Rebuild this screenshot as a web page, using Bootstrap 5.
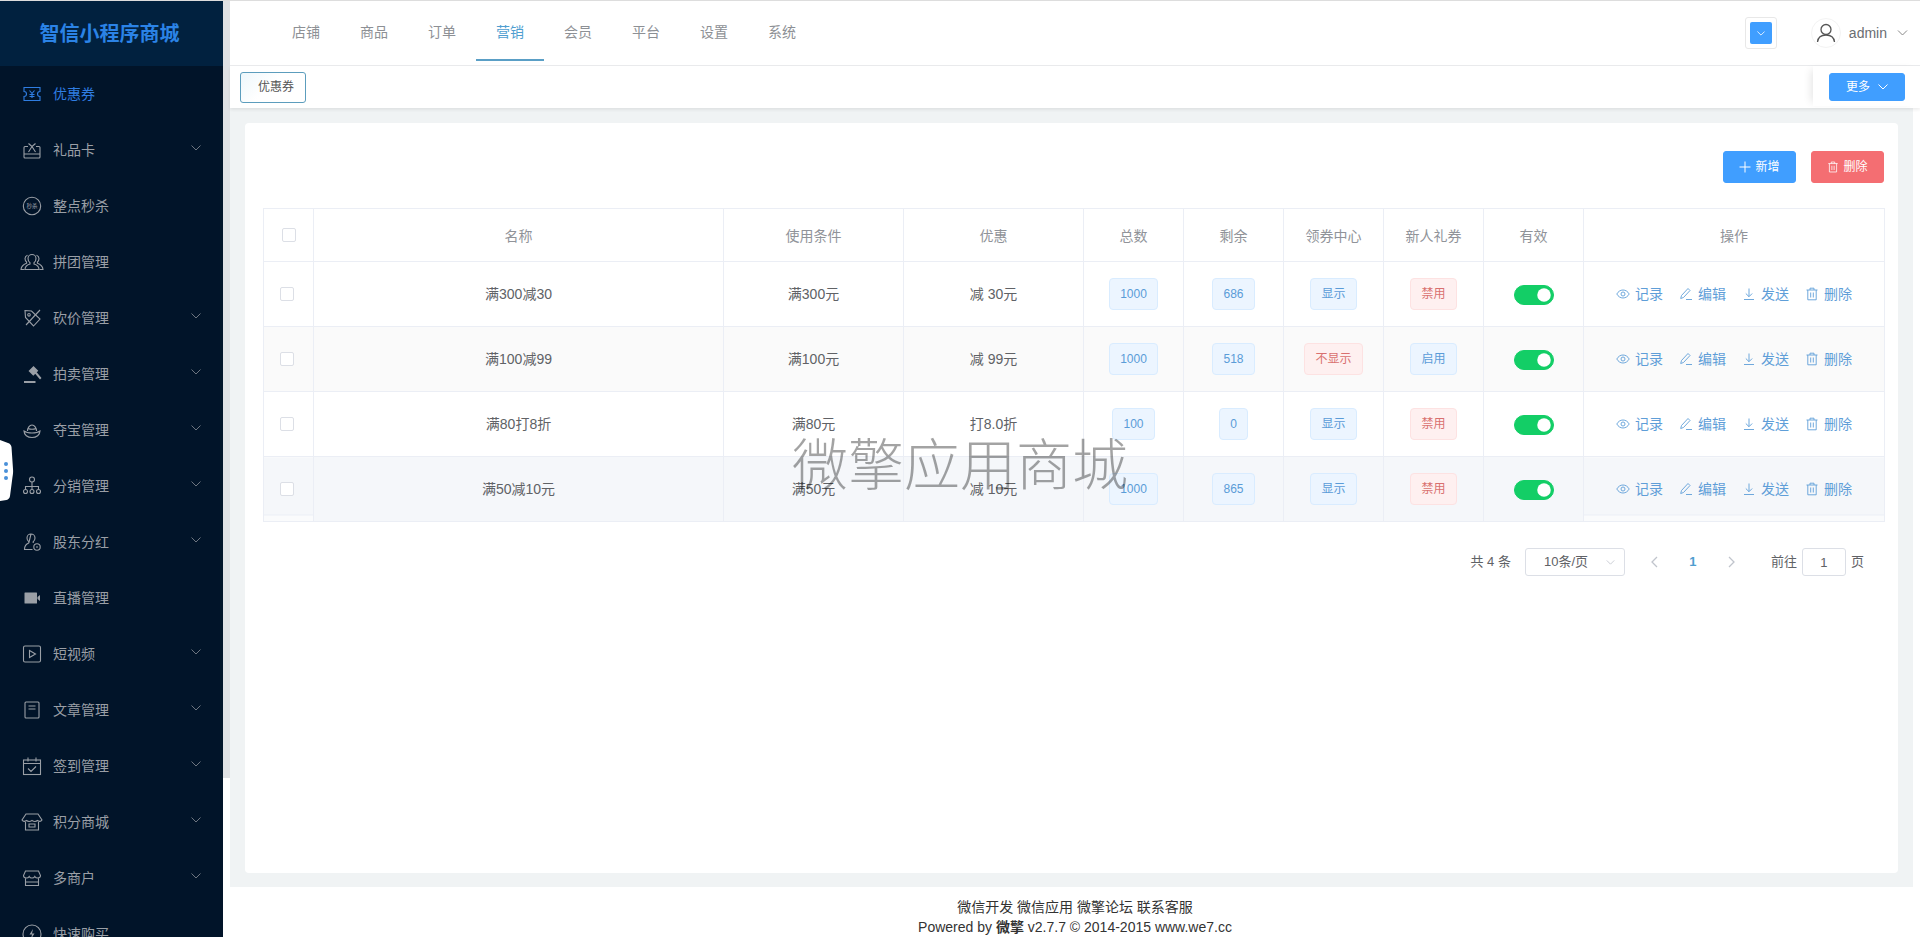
<!DOCTYPE html>
<html lang="zh">
<head>
  <meta charset="UTF-8">
  <title>智信小程序商城</title>
  <meta name="viewport" content="width=device-width, initial-scale=1">
  <link href="https://cdn.jsdelivr.net/npm/bootstrap@5.3.0/dist/css/bootstrap.min.css" rel="stylesheet">
  <style>
    html, body { height: 937px; overflow: hidden; }
    body {
      font-family: "Liberation Sans", "Noto Sans CJK SC", sans-serif;
      font-size: 14px;
      color: #606266;
      background: #fff;
    }
    .app-wrap { height: 937px; border-top: 1px solid #ddd; position: relative; }

    /* left menu */
    .side-menu { width: 223px; flex: none; background: #011429; overflow: hidden; }
    .side-logo {
      height: 65px; padding-right: 4px; background: #01213f; color: #2b83e6; flex: none;
      font-size: 20px; font-weight: 700;
    }
    .side-item {
      height: 56px; padding: 0 22px 0 20px; gap: 9px;
      color: #9a9fa6; text-decoration: none; flex: none;
    }
    .side-item.is-active { color: #2f7de1; }
    .side-item .ico { width: 24px; height: 24px; flex: none; }
    .side-item .arrow { width: 10px; height: 6px; margin: -5px 0 0 auto; color: #6d7580; }
    .ico { fill: none; stroke: currentColor; stroke-width: 1.1; }
    .ico-fill { fill: currentColor; stroke: none; }
    .side-thumb { width: 7px; height: 777px; background: #dfe1e4; flex: none; }

    /* top bar */
    .main-col { min-width: 0; }
    .top-bar { height: 65px; border-bottom: 1px solid #e9eaec; flex: none; }
    .top-nav { padding-left: 42px; }
    .top-nav a {
      width: 68px; height: 60px; line-height: 62px; text-align: center;
      color: #8d9095; text-decoration: none; border-bottom: 2px solid transparent;
    }
    .top-nav a.is-active { color: #4f9ed0; border-bottom-color: #5a9fc6; }
    .lang-box {
      width: 32px; height: 32px; border: 1px solid #e8e8e8; border-radius: 3px;
      margin-right: 34px;
    }
    .lang-box span { width: 22px; height: 22px; background: #409eff; border-radius: 2px; color: #fff; }
    .avatar-box { width: 30px; height: 30px; border: 1px solid #f3f3f3; border-radius: 50%; margin-right: 8px; color: #555; }
    .admin-name { color: #6a6d72; margin-right: 10px; }
    .admin-arrow { color: #888; margin-right: 12px; }
    .top-right { height: 64px; }

    /* tab strip */
    .tab-strip { height: 42px; flex: none; box-shadow: 0 2px 3px rgba(0,0,0,.07); position: relative; z-index: 1; background: #fff; }
    .tab-chip {
      margin: 6px 0 0 10px; width: 66px; height: 31px; line-height: 29px; padding-left: 17px;
      font-size: 12px; color: #555; border: 1px solid #5c9dbd; border-radius: 3px;
      background: linear-gradient(135deg, #eef7fb, #fff 45%);
    }
    .more-box { width: 107px; height: 40px; padding: 7px 15px 0 16px; box-shadow: -6px 0 8px -4px rgba(0,0,0,.1); background: #fff; }
    .btn-more {
      width: 76px; height: 28px; padding: 0; font-size: 12px; line-height: 26px;
      background: #409eff; border-color: #409eff; color: #fff; border-radius: 3px;
    }

    /* content */
    .content-wrap { background: #f0f3f4; padding: 15px; margin-right: 7px; min-height: 0; }
    .panel-box { background: #fff; border-radius: 4px; height: 750px; padding: 28px 14px 0 18px; }
    .btn-blue, .btn-red {
      width: 73px; height: 32px; padding: 0; font-size: 12px; color: #fff; border-radius: 3px;
    }
    .btn-blue { background: #409eff; border-color: #409eff; }
    .btn-red { background: #f46e72; border-color: #f46e72; margin-left: 15px; }
    .btn-blue:hover { background: #409eff; color: #fff; }
    .btn-red:hover { background: #f46e72; color: #fff; }
    .btn-red svg { color: #fff; }

    .coupon-table { table-layout: fixed; width: 1621px; margin: 25px 0 0; border: 1px solid #ebeef5; text-align: center; }
    .coupon-table th, .coupon-table td {
      padding: 0; vertical-align: middle; border: 1px solid #ebeef5; color: #606266; background: transparent;
      box-shadow: none;
    }
    .coupon-table th { height: 53px; padding-top: 2px; font-weight: 400; color: #909399; }
    .coupon-table td { height: 65px; }
    .row-gray { background: #fafafa; }
    .row-hover { background: #f5f7fa; }
    .coupon-table .row-hover td:first-child, .coupon-table .row-hover td:last-child {
      background: linear-gradient(#f5f7fa 0 57px, #ebeef5 57px 58px, #fafbfc 58px);
    }
    .tick-box { display: block; width: 14px; height: 14px; border: 1px solid #dcdfe6; border-radius: 2px; background: #fff; margin: 0 0 0 16px; }
    th .tick-box { margin: -2px 0 0 18px; }
    .soft-tag {
      display: inline-block; height: 32px; line-height: 30px; padding: 0 10px; font-size: 12px;
      border-radius: 4px; vertical-align: middle;
    }
    .tag-blue { color: #5a9cd8; background: #ecf5ff; border: 1px solid #d9ecff; }
    .tag-red { color: #d9706f; background: #fef0f0; border: 1px solid #fde2e2; }
    .coupon-switch.form-check-input {
      width: 40px; height: 20px; margin: 1px 0 0; float: none; border-color: #13ce66; background-color: #13ce66;
    }
    .op-row { gap: 16px; color: #5f9ed8; }
    .op-row a { color: inherit; text-decoration: none; gap: 5px; }
    .op-row svg { width: 14px; height: 14px; }

    /* pagination */
    .pager-row { padding: 26px 20px 0 0; font-size: 13px; }
    .size-picker {
      width: 100px; height: 28px; border: 1px solid #dcdfe6; border-radius: 3px; margin: 0 10px 0 14px; padding: 0 9px 0 0; color: #606266;
    }
    .size-picker span { flex: 1; text-align: center; }
    .size-picker svg { color: #c0c4cc; }
    .pager-arrow { width: 39px; color: #c0c4cc; }
    .pager-now { width: 38px; text-align: center; color: #4f9ed0; font-weight: 700; }
    .jump-label { margin-left: 20px; }
    .jump-input.form-control {
      width: 44px; height: 28px; min-height: 0; padding: 0; margin: 0 5px; text-align: center; font-size: 13px; color: #606266; border-color: #dcdfe6; border-radius: 3px;
    }

    .foot-bar { height: 50px; padding-top: 10px; text-align: center; color: #333; line-height: 20px; flex: none; }

    /* overlays */
    .stamp-text {
      position: absolute; left: 792px; top: 433px; font-size: 56px; line-height: 64px; color: rgba(0,0,0,.36);
      font-weight: 300; white-space: nowrap; pointer-events: none; z-index: 5;
    }
    .side-handle { position: absolute; left: 0; top: 438px; width: 14px; height: 62px; z-index: 5; }
  </style>
</head>
<body>
<svg class="d-none">
  <symbol id="i-ticket" viewBox="0 0 24 24"><path d="M4 5.500h16v4a2.500 2.500 0 0 0 0 5v4H4v-4a2.500 2.500 0 0 0 0-5z"/><path d="M9.500 8.500l2.500 3 2.500-3M12 11.500V16M9.500 12.500h5M9.500 14.500h5"/></symbol>
  <symbol id="i-gift" viewBox="0 0 24 24"><path d="M8 8.500H5a1 1 0 0 0-1 1V19a1 1 0 0 0 1 1h14a1 1 0 0 0 1-1V9.500a1 1 0 0 0-1-1h-3M4 16h16"/><path d="M8.500 5.500l3.500 3 3.500-3M12 8.500L8.500 14M12 8.500l3.500 5.500"/></symbol>
  <symbol id="i-seckill" viewBox="0 0 24 24"><circle cx="12" cy="12" r="8.700"/><text x="12" y="14" text-anchor="middle" font-size="5.500" fill="currentColor" stroke="none">秒杀</text></symbol>
  <symbol id="i-group" viewBox="0 0 24 24"><path d="M12 4.500a4 4 0 0 1 4 4c0 2-1 3.500-2 4.200V14c2.500.8 5 2 5 5.500H5C5 16 7.500 14.800 10 14v-1.300c-1-.7-2-2.200-2-4.200a4 4 0 0 1 4-4z"/><path d="M7.500 5.200A3.600 3.600 0 0 0 5 8.500c0 1.500.7 2.800 1.600 3.500v1.200C4 14.200 1.300 15.200 1 19.500h3.500M16.500 5.200A3.600 3.600 0 0 1 19 8.500c0 1.500-.7 2.800-1.600 3.500v1.200c2.600 1 5.300 2 5.600 6.300h-3.500"/></symbol>
  <symbol id="i-cut" viewBox="0 0 24 24"><path d="M5 4.500l6.500.5 8.500 8-6.500 7-8-8.500z"/><circle cx="9" cy="8.800" r="1.300"/><path d="M20 4L6 19"/></symbol>
  <symbol id="i-gavel" viewBox="0 0 24 24"><path class="ico-fill" d="M13.500 4l4.800 4.800-5 5L8.500 9zM15 11.500l1.500-1.500 5 6-1.500 1.500zM4 19h11.500v2H4z"/></symbol>
  <symbol id="i-ingot" viewBox="0 0 24 24"><path d="M4 13c0 4 3.500 6.500 8 6.500s8-2.500 8-6.500c-2 1.500-5 2-8 2s-6-.5-8-2z"/><path d="M7.500 13c0-3 2-6 4.500-6s4.500 3 4.500 6M8 10.500c2.500 1 5.500 1 8 0"/></symbol>
  <symbol id="i-tree" viewBox="0 0 24 24"><circle cx="12" cy="5.500" r="2.500"/><path d="M12 8v4.500M5.500 15.500v-3h13v3M12 12.500v3"/><circle cx="5.500" cy="17.500" r="2"/><circle cx="12" cy="17.500" r="2"/><circle cx="18.500" cy="17.500" r="2"/></symbol>
  <symbol id="i-holder" viewBox="0 0 24 24"><path d="M11 4a4 4 0 0 1 4 4c0 1.500-.8 3-1.800 3.700V13M8.800 13v-1.300C7.800 11 7 9.500 7 8a4 4 0 0 1 4-4zM8.800 13C6 14 4.500 16 4.500 19.500h8"/><circle cx="17" cy="17" r="3.200"/><path d="M16 17h2"/></symbol>
  <symbol id="i-live" viewBox="0 0 24 24"><path class="ico-fill" d="M5 6.500h11.500a.5.5 0 0 1 .5.500v10a.5.5 0 0 1-.5.500H5a.5.5 0 0 1-.5-.5V7a.5.5 0 0 1 .5-.5zM17.500 11l2.500-2v6l-2.500-2z"/></symbol>
  <symbol id="i-play" viewBox="0 0 24 24"><rect x="3.500" y="4" width="17" height="16" rx="1.500"/><path d="M9.500 8.500v7l6-3.500z"/></symbol>
  <symbol id="i-doc" viewBox="0 0 24 24"><rect x="5" y="4" width="14" height="16" rx="1"/><path d="M8.500 8h7M8.500 11h7"/></symbol>
  <symbol id="i-cal" viewBox="0 0 24 24"><rect x="3.500" y="6" width="17" height="14.500"/><path d="M3.500 9.500h17M8 3.500v4M16 3.500v4M8 14.500l3 3 5-5"/></symbol>
  <symbol id="i-shop" viewBox="0 0 24 24"><path d="M6 4h12l4 6c-1 1.500-3 1.500-4.500.5-1.500 1.200-3.500 1.200-5.500 0-2 1.200-4 1.200-5.500 0C5 11.500 3 11.500 2 10zM5.500 12v8h13v-8M9 14h6v3H9z"/></symbol>
  <symbol id="i-store" viewBox="0 0 24 24"><path d="M5.500 5h13l2 4.500c0 1.500-1.300 2.500-2.800 2.500-1.300 0-2.400-.7-2.900-1.600-.5.900-1.600 1.600-2.800 1.600s-2.300-.7-2.800-1.600C8.700 11.300 7.600 12 6.300 12c-1.500 0-2.800-1-2.800-2.500zM5.500 12.500v7h13v-7M5.500 16h13"/></symbol>
  <symbol id="i-fast" viewBox="0 0 24 24"><circle cx="12" cy="12" r="9"/><path class="ico-fill" d="M13 7l-3.500 5.500H12L11 17l3.500-5.500H12z"/></symbol>
  <symbol id="i-down" viewBox="0 0 10 6"><path d="M.5.500L5 5 9.500.5" fill="none" stroke="currentColor"/></symbol>
  <symbol id="i-eye" viewBox="0 0 14 14"><path d="M.8 7C2.200 4.500 4.400 3 7 3s4.800 1.500 6.200 4c-1.400 2.500-3.600 4-6.200 4S2.200 9.500.8 7z" fill="none" stroke="currentColor" stroke-width=".9"/><circle cx="7" cy="7" r="2" fill="none" stroke="currentColor" stroke-width=".9"/></symbol>
  <symbol id="i-edit" viewBox="0 0 14 14"><path d="M9 1.500l2 2-6.500 7-2.800 1 .8-3zM7 12.500h6" fill="none" stroke="currentColor" stroke-width=".9"/></symbol>
  <symbol id="i-send" viewBox="0 0 14 14"><path d="M7 1.500v8M3.800 6.500L7 9.700l3.200-3.200M2 12.500h10" fill="none" stroke="currentColor" stroke-width=".9"/></symbol>
  <symbol id="i-trash" viewBox="0 0 14 14"><path d="M1.500 3h11M5 3V1.200h4V3M2.800 3v9.800h8.400V3M5.700 5.500v5M8.300 5.500v5" fill="none" stroke="currentColor" stroke-width=".9"/></symbol>
</svg>

<div class="app-wrap d-flex">
  <aside class="side-menu d-flex flex-column">
    <div class="side-logo d-flex align-items-center justify-content-center">智信小程序商城</div>
    <a href="#" class="side-item is-active d-flex align-items-center"><svg class="ico"><use href="#i-ticket"/></svg>优惠券</a>
    <a href="#" class="side-item d-flex align-items-center"><svg class="ico"><use href="#i-gift"/></svg>礼品卡<svg class="arrow"><use href="#i-down"/></svg></a>
    <a href="#" class="side-item d-flex align-items-center"><svg class="ico"><use href="#i-seckill"/></svg>整点秒杀</a>
    <a href="#" class="side-item d-flex align-items-center"><svg class="ico"><use href="#i-group"/></svg>拼团管理</a>
    <a href="#" class="side-item d-flex align-items-center"><svg class="ico"><use href="#i-cut"/></svg>砍价管理<svg class="arrow"><use href="#i-down"/></svg></a>
    <a href="#" class="side-item d-flex align-items-center"><svg class="ico"><use href="#i-gavel"/></svg>拍卖管理<svg class="arrow"><use href="#i-down"/></svg></a>
    <a href="#" class="side-item d-flex align-items-center"><svg class="ico"><use href="#i-ingot"/></svg>夺宝管理<svg class="arrow"><use href="#i-down"/></svg></a>
    <a href="#" class="side-item d-flex align-items-center"><svg class="ico"><use href="#i-tree"/></svg>分销管理<svg class="arrow"><use href="#i-down"/></svg></a>
    <a href="#" class="side-item d-flex align-items-center"><svg class="ico"><use href="#i-holder"/></svg>股东分红<svg class="arrow"><use href="#i-down"/></svg></a>
    <a href="#" class="side-item d-flex align-items-center"><svg class="ico"><use href="#i-live"/></svg>直播管理</a>
    <a href="#" class="side-item d-flex align-items-center"><svg class="ico"><use href="#i-play"/></svg>短视频<svg class="arrow"><use href="#i-down"/></svg></a>
    <a href="#" class="side-item d-flex align-items-center"><svg class="ico"><use href="#i-doc"/></svg>文章管理<svg class="arrow"><use href="#i-down"/></svg></a>
    <a href="#" class="side-item d-flex align-items-center"><svg class="ico"><use href="#i-cal"/></svg>签到管理<svg class="arrow"><use href="#i-down"/></svg></a>
    <a href="#" class="side-item d-flex align-items-center"><svg class="ico"><use href="#i-shop"/></svg>积分商城<svg class="arrow"><use href="#i-down"/></svg></a>
    <a href="#" class="side-item d-flex align-items-center"><svg class="ico"><use href="#i-store"/></svg>多商户<svg class="arrow"><use href="#i-down"/></svg></a>
    <a href="#" class="side-item d-flex align-items-center"><svg class="ico"><use href="#i-fast"/></svg>快速购买</a>
  </aside>
  <div class="side-thumb"></div>

  <div class="main-col d-flex flex-column flex-grow-1">
    <header class="top-bar d-flex align-items-start">
      <nav class="top-nav d-flex">
        <a href="#">店铺</a><a href="#">商品</a><a href="#">订单</a><a href="#" class="is-active">营销</a><a href="#">会员</a><a href="#">平台</a><a href="#">设置</a><a href="#">系统</a>
      </nav>
      <div class="top-right d-flex align-items-center ms-auto">
        <div class="lang-box d-flex align-items-center justify-content-center"><span class="d-flex align-items-center justify-content-center"><svg width="8" height="5"><use href="#i-down"/></svg></span></div>
        <div class="avatar-box d-flex align-items-center justify-content-center">
          <svg width="22" height="22" viewBox="0 0 22 22" fill="none" stroke="currentColor" stroke-width="1.300"><circle cx="11" cy="7.500" r="5"/><path d="M2.500 20c.5-4.500 4-7 8.500-7s8 2.500 8.500 7"/></svg>
        </div>
        <span class="admin-name">admin</span>
        <svg class="admin-arrow" width="11" height="6"><use href="#i-down"/></svg>
      </div>
    </header>

    <div class="tab-strip d-flex justify-content-between">
      <div class="tab-chip">优惠券</div>
      <div class="more-box">
        <button type="button" class="btn btn-more d-flex align-items-center justify-content-center gap-2">更多 <svg width="10" height="6"><use href="#i-down"/></svg></button>
      </div>
    </div>

    <main class="content-wrap flex-grow-1">
      <div class="panel-box">
        <div class="d-flex justify-content-end">
          <button type="button" class="btn btn-blue d-flex align-items-center justify-content-center gap-1">
            <svg width="12" height="12" viewBox="0 0 12 12"><path d="M6 .5v11M.5 6h11" stroke="#fff" fill="none"/></svg> 新增</button>
          <button type="button" class="btn btn-red d-flex align-items-center justify-content-center gap-1">
            <svg width="12" height="12"><use href="#i-trash"/></svg> 删除</button>
        </div>

        <table class="table coupon-table">
          <colgroup>
            <col style="width:50px"><col style="width:410px"><col style="width:180px"><col style="width:180px">
            <col style="width:100px"><col style="width:100px"><col style="width:100px"><col style="width:100px"><col style="width:100px"><col style="width:301px">
          </colgroup>
          <thead>
            <tr>
              <th><span class="tick-box"></span></th>
              <th>名称</th><th>使用条件</th><th>优惠</th><th>总数</th><th>剩余</th><th>领券中心</th><th>新人礼券</th><th>有效</th><th>操作</th>
            </tr>
          </thead>
          <tbody id="couponBody"></tbody>
        </table>

        <div class="pager-row d-flex align-items-center justify-content-end">
          <span>共 4 条</span>
          <div class="size-picker d-flex align-items-center"><span>10条/页</span><svg width="9" height="5"><use href="#i-down"/></svg></div>
          <span class="pager-arrow d-flex justify-content-center"><svg width="7" height="12" viewBox="0 0 7 12"><path d="M6 1L1 6l5 5" fill="none" stroke="currentColor" stroke-width="1.300"/></svg></span>
          <span class="pager-now">1</span>
          <span class="pager-arrow d-flex justify-content-center"><svg width="7" height="12" viewBox="0 0 7 12"><path d="M1 1l5 5-5 5" fill="none" stroke="currentColor" stroke-width="1.300"/></svg></span>
          <span class="jump-label">前往</span>
          <input type="text" class="form-control jump-input" value="1">
          <span>页</span>
        </div>
      </div>
    </main>

    <footer class="foot-bar">
      <div>微信开发 微信应用 微擎论坛 联系客服</div>
      <div>Powered by <b>微擎</b> v2.7.7 © 2014-2015 www.we7.cc</div>
    </footer>
  </div>

  <div class="stamp-text">微擎应用商城</div>
  <svg class="side-handle" viewBox="0 0 14 62">
    <path d="M0 1L8 4c2 .6 3 2 3.500 4L13 30c.3 3 0 5-.5 8l-2.500 19c-.3 2-1.500 3.500-3.500 4L0 62z" fill="#fff"/>
    <circle cx="6" cy="25" r="2" fill="#4a90d9"/><circle cx="6" cy="32" r="2" fill="#4a90d9"/><circle cx="6" cy="39" r="2" fill="#4a90d9"/>
  </svg>
</div>

<script src="https://cdn.jsdelivr.net/npm/bootstrap@5.3.0/dist/js/bootstrap.bundle.min.js"></script>
<script>
  // table rows
  const kupon = [
    { nama: "满300减30", syarat: "满300元", diskon: "减 30元", total: 1000, sisa: 686, pusat: ["显示", "blue"], baru: ["禁用", "red"], kelas: "" },
    { nama: "满100减99", syarat: "满100元", diskon: "减 99元", total: 1000, sisa: 518, pusat: ["不显示", "red"], baru: ["启用", "blue"], kelas: "row-gray" },
    { nama: "满80打8折", syarat: "满80元", diskon: "打8.0折", total: 100, sisa: 0, pusat: ["显示", "blue"], baru: ["禁用", "red"], kelas: "" },
    { nama: "满50减10元", syarat: "满50元", diskon: "减 10元", total: 1000, sisa: 865, pusat: ["显示", "blue"], baru: ["禁用", "red"], kelas: "row-hover" }
  ];

  const aksi = [["i-eye", "记录"], ["i-edit", "编辑"], ["i-send", "发送"], ["i-trash", "删除"]]
    .map(a => `<a href="#" class="d-flex align-items-center"><svg><use href="#${a[0]}"/></svg>${a[1]}</a>`)
    .join("");

  document.getElementById("couponBody").innerHTML = kupon.map(k => `
    <tr class="${k.kelas}">
      <td><span class="tick-box"></span></td>
      <td>${k.nama}</td>
      <td>${k.syarat}</td>
      <td>${k.diskon}</td>
      <td><span class="soft-tag tag-blue">${k.total}</span></td>
      <td><span class="soft-tag tag-blue">${k.sisa}</span></td>
      <td><span class="soft-tag tag-${k.pusat[1]}">${k.pusat[0]}</span></td>
      <td><span class="soft-tag tag-${k.baru[1]}">${k.baru[0]}</span></td>
      <td><div class="form-switch d-flex justify-content-center p-0"><input class="form-check-input coupon-switch" type="checkbox" role="switch" checked></div></td>
      <td><div class="op-row d-flex justify-content-center">${aksi}</div></td>
    </tr>`).join("");
</script>
</body>
</html>
